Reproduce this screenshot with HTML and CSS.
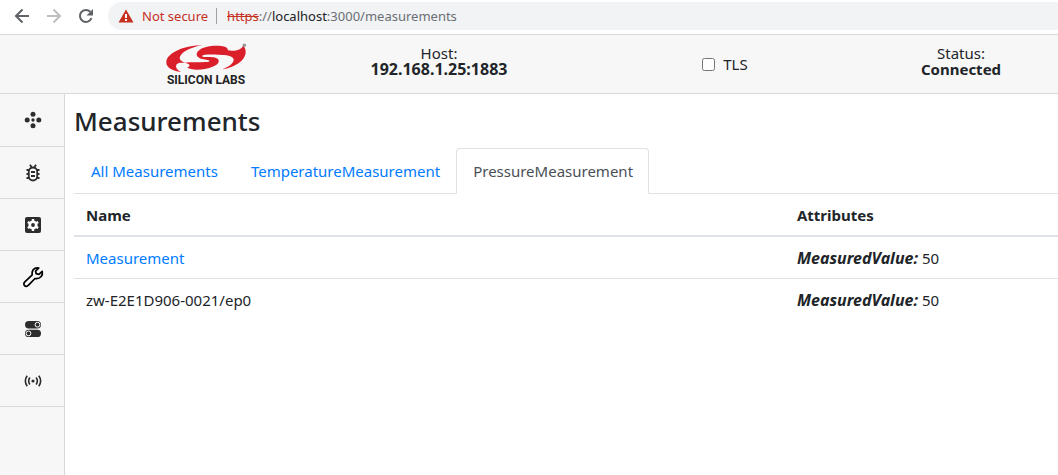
FILE: index.html
```html
<!DOCTYPE html>
<html lang="en">
<head>
<meta charset="utf-8">
<meta name="viewport" content="width=device-width, initial-scale=1">
<title>Measurements</title>
<link rel="stylesheet" href="styles.css">
</head>
<body>
<div class="browser">
  <button class="nav-btn" aria-label="Back"><svg width="16" height="16" viewBox="0 0 16 16" fill="none" stroke="#5f6368" stroke-width="2"><path d="M15 8H2M8.500 1.500L2 8l6.500 6.500"/></svg></button>
  <button class="nav-btn" aria-label="Forward"><svg width="16" height="16" viewBox="0 0 16 16" fill="none" stroke="#bdbfc1" stroke-width="2"><path d="M1 8h13M7.500 1.500L14 8l-6.500 6.500"/></svg></button>
  <button class="nav-btn" aria-label="Reload"><svg width="16" height="16" viewBox="0 0 16 16"><path d="M13.500 10.200A6 6 0 1 1 12.300 3.800" fill="none" stroke="#5f6368" stroke-width="2"/><path d="M15 1v6.500H8.500z" fill="#5f6368"/></svg></button>
  <div class="address">
    <svg width="16" height="14" viewBox="0 0 16 14"><path d="M8 .5L15.500 13.500H.5z" fill="#c5301f"/><path d="M7 5h2v4H7zM7 10h2v2H7z" fill="#fff"/></svg>
    <span class="insecure">Not secure</span>
    <span class="divider"></span>
    <span class="url"><s>https</s>://<b>localhost</b>:3000/measurements</span>
  </div>
</div>
<header class="topbar">
  <div class="brand">
    <svg class="swoosh" width="81" height="30" viewBox="48 25 243 90">
      <g fill="#da1f2b">
        <path d="M158 31C105 32 48 54 49 84C50 99 66 107 93 112C78 104 76 96 80 89C83 84 92 83 106 85C92 80 86 73 91 64C98 50 124 37 158 31Z"/>
        <path d="M234 47C235 34 208 32 184 34C157 37 141 48 140 58C140 68 150 73 168 75C184 77 180 81 168 82C145 84 122 82 104 84C120 87 124 94 111 98C120 106 146 107 168 102C196 97 208 87 206 77C204 67 184 66 166 67C154 66 153 62 166 60C190 58 222 64 232 55Z"/>
        <path d="M279 34C274 45 256 51 233 47C228 54 218 59 208 61C236 60 250 66 251 74C252 85 238 96 217 104C254 99 287 77 287 52C287 43 284 38 279 34Z"/>
      </g>
      <circle cx="283" cy="32" r="4" fill="#aaa" stroke="#666" stroke-width="2"/>
    </svg>
    <span class="brand-name">SILICON LABS</span>
  </div>
  <div class="info">Host:<strong class="host">192.168.1.25:1883</strong></div>
  <label class="tls"><input type="checkbox">TLS</label>
  <div class="info">Status:<strong>Connected</strong></div>
</header>
<div class="layout">
  <nav class="sidebar">
    <a href="#nodes" aria-label="Nodes"><svg width="18" height="18" viewBox="0 0 18 18" fill="#2d2d2d"><circle cx="9" cy="3.200" r="2.500"/><circle cx="3.200" cy="9" r="2.500"/><circle cx="14.800" cy="9" r="2.500"/><circle cx="9" cy="14.800" r="2.500"/><circle cx="9" cy="9" r="1.700"/></svg></a>
    <a href="#debug" aria-label="Debug"><svg width="18" height="18" viewBox="0 0 18 18" fill="none" stroke="#2d2d2d" stroke-width="1.800"><rect x="4.800" y="3.500" width="8.400" height="13" rx="4.200"/><path d="M6 .8l1.600 2.400M12 .8l-1.600 2.400M2.500 6h2.500M2.500 10h2.500M2.500 14h2.800M13 6h2.500M13 10h2.500M12.700 14h2.800M7 8h4M7 12h4"/></svg></a>
    <a href="#settings" aria-label="Settings"><svg width="18" height="18" viewBox="0 0 18 18"><rect x="1" y="1" width="16" height="16" rx="2" fill="#2d2d2d"/><circle cx="9" cy="9" r="3.200" fill="none" stroke="#fff" stroke-width="2.800"/><path d="M9 3v12M3.800 6l10.400 6M3.800 12l10.400-6" stroke="#fff" stroke-width="2.400"/><circle cx="9" cy="9" r="1.900" fill="#2d2d2d"/></svg></a>
    <a href="#tools" aria-label="Tools"><svg width="22" height="22" viewBox="0 0 22 22" fill="none" stroke="#000" stroke-width="1.700" stroke-linejoin="round"><path d="M16.800 2C14 1.200 10.700 2.800 10.200 6C10 7.500 10.300 8.400 10 9.100L2.800 15.900C1.500 17.200 1.700 18.900 2.600 19.700C3.500 20.600 5.200 20.500 6.300 19.300L13 12.500C15.200 12.900 17.500 12.500 19 10.800C20.300 9.300 20.700 7.300 20.200 5.400L16.900 8.300L14.200 7.700L13.600 5.200Z"/></svg></a>
    <a href="#switches" aria-label="Switches"><svg width="18" height="18" viewBox="0 0 18 18"><rect x="1" y="1" width="16" height="7.400" rx="3.700" fill="#2d2d2d"/><rect x="1" y="9.700" width="16" height="7.400" rx="3.700" fill="#2d2d2d"/><g fill="none" stroke="#fff"><circle cx="13.500" cy="4.700" r="2.400"/><circle cx="4.500" cy="13.400" r="2.400"/></g></svg></a>
    <a href="#signal" aria-label="Signal"><svg width="18" height="18" viewBox="0 0 18 18" fill="none" stroke="#2d2d2d" stroke-width="1.600"><circle cx="9" cy="9" r="1.600" fill="#2d2d2d" stroke="none"/><path d="M5.900 5.500q-2.500 3.500 0 7M12.100 5.500q2.500 3.500 0 7M3.200 3.800q-3.700 5.200 0 10.400M14.800 3.800q3.700 5.200 0 10.400"/></svg></a>
  </nav>
  <main class="content">
    <h1>Measurements</h1>
    <div class="tabs">
      <a class="tab" href="#all">All Measurements</a>
      <a class="tab" href="#temperature">TemperatureMeasurement</a>
      <a class="tab active" href="#pressure">PressureMeasurement</a>
    </div>
    <table>
      <thead><tr><th class="name">Name</th><th>Attributes</th></tr></thead>
      <tbody>
        <tr><td><a href="#measurement">Measurement</a></td><td><b class="attr">MeasuredValue:</b> 50</td></tr>
        <tr><td>zw-E2E1D906-0021/ep0</td><td><b class="attr">MeasuredValue:</b> 50</td></tr>
      </tbody>
    </table>
  </main>
</div>
</body>
</html>
```
FILE: styles.css
```css
* { box-sizing: border-box; }
body {
  margin: 0;
  min-height: 100vh;
  display: flex;
  flex-direction: column;
  background: #fff;
  color: #212529;
  font: 15px/24px "Noto Sans", "Open Sans", sans-serif;
}
a { color: #007bff; text-decoration: none; }
.browser {
  display: flex;
  align-items: center;
  gap: 16px;
  height: 34px;
  padding: 2px 0 4px 14px;
}
.nav-btn { display: flex; padding: 0; border: 0; background: none; }
.nav-btn svg { display: block; }
.address {
  flex: 1;
  display: flex;
  align-items: center;
  gap: 8px;
  height: 28px;
  margin-left: -2px;
  padding-left: 10px;
  border-radius: 14px 0 0 14px;
  background: #f1f3f4;
  font-size: 13px;
}
.insecure, .url s { color: #c5301f; }
.divider { width: 1px; height: 16px; background: #9aa0a6; }
.url { padding-left: 2px; color: #6b6f74; }
.url b { color: #202124; font-weight: 400; }
.topbar {
  display: grid;
  grid-template-columns: 232fr 234fr 338fr 134fr;
  align-items: center;
  height: 60px;
  padding: 0 30px 0 90px;
  border: solid #d9d9d9;
  border-width: 1px 0;
  background: #f7f7f7;
}
.brand { display: flex; flex-direction: column; align-items: center; gap: 1px; padding-top: 1px; }
.brand-name { font: 700 12px/12px Roboto, sans-serif; color: #222; }
.info { display: flex; flex-direction: column; align-items: center; line-height: 16px; padding-bottom: 6px; }
.host, .attr { font-size: 16px; }
.attr { font-style: italic; line-height: 20px; }
.tls { display: flex; align-items: center; justify-content: center; gap: 8px; }
.tls input { width: 13px; height: 13px; margin: 0; }
.layout { flex: 1; display: flex; }
.sidebar { width: 65px; border-right: 1px solid #d9d9d9; background: #f7f7f7; }
.sidebar a {
  display: flex;
  align-items: center;
  justify-content: center;
  height: 52px;
  padding-left: 2px;
  border-bottom: 1px solid #d9d9d9;
}
.sidebar a:first-child { height: 53px; }
.content { flex: 1; padding: 10px 0 0 9px; }
h1 { margin: 0 0 10px; font-size: 26px; line-height: 34px; font-weight: 500; }
.tabs { display: flex; border-bottom: 1px solid #dee2e6; }
.tab { margin-bottom: -1px; padding: 10px 15px 10px 16px; border: 1px solid transparent; border-radius: 4px 4px 0 0; }
.tab.active { color: #495057; background: #fff; border-color: #dee2e6 #dee2e6 #fff; }
table { width: 100%; border-collapse: collapse; table-layout: fixed; }
th, td { padding: 9px 12px 8px; text-align: left; }
th { border-bottom: 2px solid #dee2e6; }
.name { width: 72.25%; }
tbody tr + tr td { border-top: 1px solid #dee2e6; }
```
